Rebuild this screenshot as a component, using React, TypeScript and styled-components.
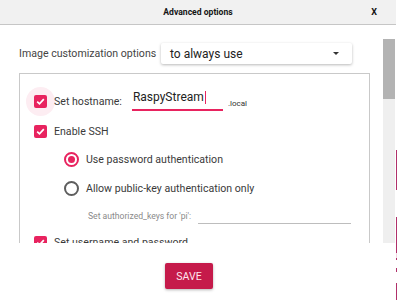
import React from 'react';
import styled, { createGlobalStyle } from 'styled-components';

const GlobalStyle = createGlobalStyle`
  html, body {
    margin: 0;
    padding: 0;
    background: #ffffff;
  }
  body {
    font-family: Roboto, "Liberation Sans", sans-serif;
    color: #333333;
  }
`;

const PINK = '#e8235f';

const Page = styled.div`
  display: flex;
  width: 397px;
  height: 300px;
  overflow: hidden;
`;

const Dialog = styled.div`
  display: flex;
  flex-direction: column;
  width: 396px;
  height: 300px;
  background: #ffffff;
`;

const Backdrop = styled.div`
  width: 1px;
  height: 300px;
  background: linear-gradient(
    to bottom,
    #ffffff 0 150px,
    #b0306a 150px 190px,
    #ffffff 190px 217px,
    #b0306a 217px 253px,
    #f4d6e2 253px 258px,
    #b0306a 258px 260px,
    #ffffff 260px 268px,
    #b0306a 268px 272px,
    #ffffff 272px 283px,
    #b0306a 283px 300px
  );
`;

const Header = styled.div`
  display: grid;
  grid-template-columns: 1fr auto 1fr;
  align-items: center;
  height: 24px;
  background: #f1f1f1;
  border-bottom: 1px solid #c6c6c6;
`;

const Title = styled.div`
  grid-column: 2;
  font-size: 8.6px;
  font-weight: 700;
  color: #151515;
`;

const Close = styled.div`
  grid-column: 3;
  justify-self: end;
  padding-right: 19px;
  font-size: 9px;
  font-weight: 700;
  color: #151515;
`;

const Main = styled.div`
  display: flex;
  margin-top: 14px;
  height: 204px;
  overflow: hidden;
`;

const Content = styled.div`
  flex: 0 0 383px;
  padding-left: 19px;
  box-sizing: border-box;
`;

const Scrollbar = styled.div`
  flex: 0 0 12px;
  display: flex;
  flex-direction: column;
  background: #efefef;
`;

const Thumb = styled.div`
  height: 60px;
  background: #b3b3b3;
`;

const TopRow = styled.div`
  display: flex;
  align-items: center;
  margin-top: 4px;
  height: 21px;
`;

const TopLabel = styled.div`
  flex: 0 0 142px;
  font-size: 10.6px;
  color: #444444;
  white-space: nowrap;
`;

const Select = styled.div`
  display: flex;
  align-items: center;
  justify-content: space-between;
  width: 191px;
  height: 21px;
  box-sizing: border-box;
  padding: 0 13px 0 9px;
  background: #ffffff;
  border-radius: 2px;
  box-shadow: 0 1px 3px rgba(0, 0, 0, 0.28);
  font-size: 12px;
  color: #222222;
`;

const Caret = styled.span`
  width: 0;
  height: 0;
  border-left: 3px solid transparent;
  border-right: 3px solid transparent;
  border-top: 3.5px solid #333333;
`;

const Group = styled.div`
  margin-top: 9px;
  width: 351px;
  box-sizing: border-box;
  border: 1px solid #c9c9c9;
  padding: 16px 0 30px 14px;
  display: flex;
  flex-direction: column;
`;

const Row = styled.div<{ $gap?: number; $indent?: number }>`
  display: flex;
  align-items: center;
  height: 22px;
  margin-top: ${(p) => p.$gap ?? 0}px;
  margin-left: ${(p) => p.$indent ?? 0}px;
`;

const Label = styled.span`
  margin-left: 7px;
  font-size: 10.6px;
  color: #3a3a3a;
  white-space: nowrap;
`;

const Halo = styled.span<{ $focus?: boolean }>`
  display: flex;
  margin: -8px;
  padding: 8px;
  border-radius: 50%;
  background: ${(p) => (p.$focus ? '#fdedf2' : 'transparent')};
`;

const CheckBox = styled.span`
  display: flex;
  align-items: center;
  justify-content: center;
  width: 13px;
  height: 13px;
  border-radius: 2px;
  background: ${PINK};
`;

const Radio = styled.span<{ $on?: boolean }>`
  display: flex;
  align-items: center;
  justify-content: center;
  flex: 0 0 15px;
  height: 15px;
  box-sizing: border-box;
  border-radius: 50%;
  border: 2px solid ${(p) => (p.$on ? PINK : '#5e5e5e')};

  &::after {
    content: '';
    display: ${(p) => (p.$on ? 'block' : 'none')};
    width: 7px;
    height: 7px;
    border-radius: 50%;
    background: ${PINK};
  }
`;

const HostInput = styled.div`
  align-self: flex-start;
  display: flex;
  align-items: flex-start;
  margin-left: 10px;
  width: 91px;
  height: 21px;
  box-sizing: border-box;
  padding-left: 1px;
  border-bottom: 2px solid ${PINK};
  font-size: 12px;
  line-height: 14px;
  color: #222222;
`;

const TextCursor = styled.span`
  display: inline-block;
  width: 1px;
  height: 13px;
  margin-left: 1px;
  margin-top: 1px;
  background: ${PINK};
`;

const Suffix = styled.span`
  margin-left: 5px;
  margin-top: 5px;
  font-size: 8px;
  color: #333333;
`;

const KeysRow = styled.div`
  display: flex;
  align-items: center;
  height: 16px;
  margin-top: 9px;
  margin-left: 54px;
`;

const KeysLabel = styled.span`
  font-size: 8.6px;
  color: #8a8a8a;
  white-space: nowrap;
`;

const KeysField = styled.div`
  margin-left: 7px;
  width: 153px;
  height: 16px;
  box-sizing: border-box;
  border-bottom: 1px solid #bdbdbd;
`;

const Footer = styled.div`
  flex: 1;
  display: flex;
  justify-content: center;
  align-items: flex-start;
  padding: 20px 18px 0 0;
`;

const SaveButton = styled.button`
  width: 48px;
  height: 26px;
  border: none;
  border-radius: 2px;
  background: #c51a4a;
  box-shadow: 0 1px 3px rgba(0, 0, 0, 0.3);
  font-family: Roboto, "Liberation Sans", sans-serif;
  font-size: 10.6px;
  color: #fde6ee;
  padding: 0;
`;

const Check = ({ focus }: { focus?: boolean }) => (
  <Halo $focus={focus}>
    <CheckBox>
      <svg width="9" height="9" viewBox="0 0 9 9">
        <path d="M1.2 4.6 L3.5 6.8 L7.8 2.2" fill="none" stroke="#ffffff" strokeWidth="1.7" />
      </svg>
    </CheckBox>
  </Halo>
);

export default function App() {
  return (
    <>
      <GlobalStyle />
      <Page>
        <Dialog>
          <Header>
            <Title>Advanced options</Title>
            <Close>X</Close>
          </Header>
          <Main>
            <Content>
              <TopRow>
                <TopLabel>Image customization options</TopLabel>
                <Select>
                  <span>to always use</span>
                  <Caret />
                </Select>
              </TopRow>
              <Group>
                <Row>
                  <Check focus />
                  <Label>Set hostname:</Label>
                  <HostInput>
                    RaspyStream
                    <TextCursor />
                  </HostInput>
                  <Suffix>.local</Suffix>
                </Row>
                <Row $gap={8}>
                  <Check />
                  <Label>Enable SSH</Label>
                </Row>
                <Row $gap={6} $indent={30}>
                  <Radio $on />
                  <Label>Use password authentication</Label>
                </Row>
                <Row $gap={7} $indent={30}>
                  <Radio />
                  <Label>Allow public-key authentication only</Label>
                </Row>
                <KeysRow>
                  <KeysLabel>Set authorized_keys for 'pi':</KeysLabel>
                  <KeysField />
                </KeysRow>
                <Row $gap={7}>
                  <Check />
                  <Label>Set username and password</Label>
                </Row>
              </Group>
            </Content>
            <Scrollbar>
              <Thumb />
            </Scrollbar>
          </Main>
          <Footer>
            <SaveButton>SAVE</SaveButton>
          </Footer>
        </Dialog>
        <Backdrop />
      </Page>
    </>
  );
}
